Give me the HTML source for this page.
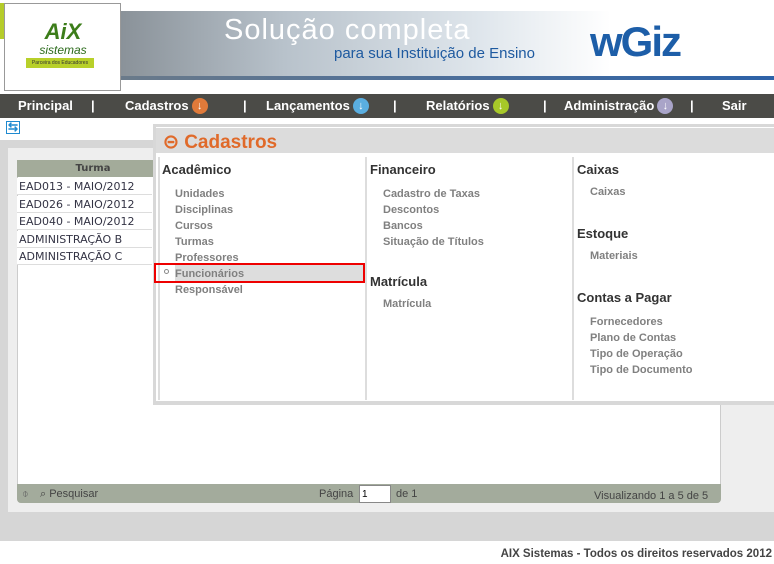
<!DOCTYPE html>
<html><head><meta charset="utf-8"><style>
*{margin:0;padding:0;box-sizing:border-box}
body{width:774px;height:564px;position:relative;background:#fff;font-family:"Liberation Sans",Arial,sans-serif;overflow:hidden}
.a{position:absolute;white-space:nowrap}
.nav{left:0;top:94px;width:774px;height:24px;background:#4b4b47;color:#fff;font-weight:bold;font-size:13px}
.nav span{position:absolute;top:4px;white-space:nowrap;line-height:16px;height:16px}
.ic{display:inline-block;width:16px;height:16px;border-radius:50%;vertical-align:top;margin-left:3px;color:#fff;font-size:11px;text-align:center;line-height:16px;font-style:normal}
.row{left:17px;width:135px;height:17px;border-bottom:1px solid #ddd;font-family:"DejaVu Sans",sans-serif;font-size:11px;color:#334;padding:2px 0 0 2px;background:#fff}
.h{font-size:13px;font-weight:bold;color:#333}
.it{font-size:11px;font-weight:bold;color:#808080}
</style></head><body>
<div class="a" style="left:0;top:3px;width:4px;height:36px;background:#b5cc2a"></div>
<div class="a" style="left:4px;top:3px;width:117px;height:88px;border:1px solid #999;background:#fff"></div>
<div class="a" style="left:28px;top:22px;width:70px;text-align:center;color:#3c7d1a;font-style:italic;font-weight:bold;font-size:22px;line-height:20px">AiX</div>
<div class="a" style="left:28px;top:43px;width:70px;text-align:center;color:#2a6a1a;font-style:italic;font-size:12px">sistemas</div>
<div class="a" style="left:26px;top:58px;width:68px;height:10px;background:#b8d02a;font-size:5px;text-align:center;line-height:10px;color:#333">Parceira dos Educadores</div>
<div class="a" style="left:121px;top:11px;width:653px;height:67px;background:linear-gradient(90deg,#8a9299 0%,#b8c2cb 25%,#dfe6ec 55%,#fff 75%)"></div>
<div class="a" style="left:121px;top:76px;width:653px;height:4px;background:linear-gradient(90deg,#6a7a8a,#2d62a8)"></div>
<div class="a" style="left:224px;top:14px;color:#fff;font-size:29px;letter-spacing:1px">Solução completa</div>
<div class="a" style="left:334px;top:45px;color:#1e5aa0;font-size:15px">para sua Instituição de Ensino</div>
<div class="a" style="left:590px;top:18px;color:#1d5ea8;font-size:42px;font-weight:bold;letter-spacing:-2px">wGiz</div>
<div class="nav a">
<span style="left:18px">Principal</span><span style="left:91px">|</span>
<span style="left:125px">Cadastros<i class="ic" style="background:#e07a3a">↓</i></span><span style="left:243px">|</span>
<span style="left:266px">Lançamentos<i class="ic" style="background:#5aaee0">↓</i></span><span style="left:393px">|</span>
<span style="left:426px">Relatórios<i class="ic" style="background:#a7c829">↓</i></span><span style="left:543px">|</span>
<span style="left:564px">Administração<i class="ic" style="background:#a9a4c8">↓</i></span><span style="left:690px">|</span>
<span style="left:722px">Sair</span></div>
<div class="a" style="left:0;top:118px;width:774px;height:423px;background:#d6d6d6"></div>
<div class="a" style="left:0;top:118px;width:774px;height:22px;background:#fff"></div>
<div class="a" style="left:6px;top:121px;color:#1f8ad0;font-size:12px;font-weight:bold;border:1px solid #1f8ad0;line-height:11px;padding:0 1px">⇆</div>
<div class="a" style="left:8px;top:148px;width:766px;height:364px;background:#eee"></div>
<div class="a" style="left:17px;top:160px;width:704px;height:343px;background:#fff;border-radius:4px;border:1px solid #ccc"></div>
<div class="a" style="left:17px;top:160px;width:140px;height:17px;background:#a3ab9a;color:#444;font-size:10px;font-weight:bold;text-align:center;padding-top:3px;padding-left:12px;font-family:'DejaVu Sans',sans-serif">Turma</div>
<div class="a row" style="top:178px">EAD013 - MAIO/2012</div>
<div class="a row" style="top:196px">EAD026 - MAIO/2012</div>
<div class="a row" style="top:213px">EAD040 - MAIO/2012</div>
<div class="a row" style="top:231px">ADMINISTRAÇÃO B</div>
<div class="a row" style="top:248px">ADMINISTRAÇÃO C</div>
<div class="a" style="left:17px;top:484px;width:704px;height:19px;background:#a3ab9c;border-radius:0 0 4px 4px"></div>
<div class="a" style="left:22px;top:488px;font-size:11px;color:#666">⌽</div>
<div class="a" style="left:40px;top:488px;font-size:11px;color:#444">⌕ Pesquisar</div>
<div class="a" style="left:319px;top:488px;font-size:11px;color:#444">Página</div>
<div class="a" style="left:359px;top:485px;width:32px;height:18px;background:#fff;border:1px solid #888;font-size:10px;padding:3px 2px">1</div>
<div class="a" style="left:396px;top:488px;font-size:11px;color:#444">de 1</div>
<div class="a" style="left:594px;top:490px;font-size:11px;color:#444">Visualizando 1 a 5 de 5</div>
<div class="a" style="left:153px;top:124px;width:621px;height:281px;background:#d8d8d8"></div>
<div class="a" style="left:156px;top:127px;width:618px;height:26px;background:#dcdcdc;border-top:1px solid #fff"></div>
<div class="a" style="left:163px;top:131px;color:#e06a2a;font-size:19px;font-weight:bold">⊝ Cadastros</div>
<div class="a" style="left:156px;top:153px;width:618px;height:248px;background:#fff"></div>
<div class="a" style="left:158px;top:157px;width:2px;height:243px;background:#ddd"></div>
<div class="a" style="left:365px;top:157px;width:2px;height:243px;background:#ddd"></div>
<div class="a" style="left:572px;top:157px;width:2px;height:243px;background:#ddd"></div>
<div class="a h" style="left:162px;top:162px">Acadêmico</div>
<div class="a" style="left:175px;top:263px;width:190px;height:18px;background:#ddd"></div>
<div class="a" style="left:154px;top:263px;width:211px;height:20px;border:2px solid #e00"></div>
<div class="a" style="left:164px;top:269px;width:5px;height:5px;border:1px solid #888;border-radius:50%"></div>
<div class="a it" style="left:175px;top:186px;line-height:16px">Unidades<br>Disciplinas<br>Cursos<br>Turmas<br>Professores<br>Funcionários<br>Responsável</div>
<div class="a h" style="left:370px;top:162px">Financeiro</div>
<div class="a it" style="left:383px;top:186px;line-height:16px">Cadastro de Taxas<br>Descontos<br>Bancos<br>Situação de Títulos</div>
<div class="a h" style="left:370px;top:274px">Matrícula</div>
<div class="a it" style="left:383px;top:298px">Matrícula</div>
<div class="a h" style="left:577px;top:162px">Caixas</div>
<div class="a it" style="left:590px;top:186px">Caixas</div>
<div class="a h" style="left:577px;top:226px">Estoque</div>
<div class="a it" style="left:590px;top:250px">Materiais</div>
<div class="a h" style="left:577px;top:290px">Contas a Pagar</div>
<div class="a it" style="left:590px;top:314px;line-height:16px">Fornecedores<br>Plano de Contas<br>Tipo de Operação<br>Tipo de Documento</div>
<div class="a" style="right:2px;top:548px;font-size:11.5px;font-weight:bold;color:#444">AIX Sistemas - Todos os direitos reservados 2012</div>
</body></html>
